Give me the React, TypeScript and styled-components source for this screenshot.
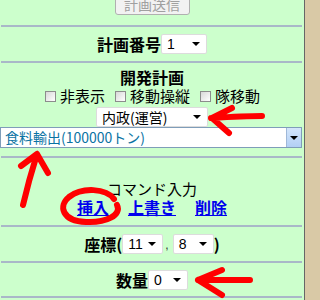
import React from 'react';
import styled, {createGlobalStyle} from 'styled-components';

const GlobalStyle = createGlobalStyle`
  html, body {
    margin: 0;
    padding: 0;
    background: #d9c9a6;
  }
  body {
    font-family: "Noto Sans CJK JP", "Liberation Sans", sans-serif;
  }
`;

const Page = styled.div`
  position: relative;
  width: 304px;
  height: 300px;
  overflow: hidden;
  background: #ccffcc;
  border-right: 1px solid #666666;
`;

const Section = styled.div<{$top: number; $bottom: number}>`
  display: flex;
  flex-direction: column;
  align-items: center;
  padding: ${p => p.$top}px 0 ${p => p.$bottom}px;
`;

const Rule = styled.div`
  height: 2px;
  margin: 0 2px 0 1px;
  background: #a9b8c8;
`;

const SendButton = styled.button`
  margin-top: -7px;
  width: 75px;
  height: 22px;
  padding: 0;
  font-family: inherit;
  font-size: 14px;
  line-height: 20px;
  color: #a0a0a0;
  background: #f2f2f2;
  border: 1px solid #b0b0b0;
  border-radius: 3px;
`;

const Row = styled.div`
  display: flex;
  align-items: center;
  justify-content: center;
  height: 20px;
`;

const Label = styled.span`
  font-size: 16px;
  font-weight: 700;
  line-height: 20px;
  color: #000;
`;

const Title = styled.div`
  height: 20px;
  font-size: 16px;
  font-weight: 700;
  line-height: 20px;
  color: #000;
`;

const SubTitle = styled.div`
  height: 18px;
  font-size: 15px;
  line-height: 18px;
  color: #000;
`;

const SelectBox = styled.div<{$width: number; $top?: number}>`
  display: flex;
  align-items: center;
  justify-content: space-between;
  box-sizing: border-box;
  width: ${p => p.$width}px;
  height: 20px;
  margin-top: ${p => p.$top ?? 0}px;
  padding: 0 6px 0 5px;
  background: #fff;
  border: 1px solid #dcdcdc;
  border-radius: 2px;
  font-family: "Liberation Sans", "Noto Sans CJK JP", sans-serif;
  font-size: 14px;
  line-height: 18px;
  color: #000;
`;

const SelectText = styled.span`
  font-family: "Noto Sans CJK JP", sans-serif;
`;

const Caret = styled.span`
  width: 0;
  height: 0;
  border-left: 4px solid transparent;
  border-right: 4px solid transparent;
  border-top: 4px solid #000;
`;

const CheckRow = styled.div`
  display: flex;
  align-items: center;
  gap: 10px;
  height: 18px;
  margin-left: 1px;
`;

const CheckItem = styled.label`
  display: flex;
  align-items: center;
  gap: 4px;
  font-size: 15px;
  line-height: 18px;
  color: #000;
`;

const CheckBox = styled.span`
  box-sizing: border-box;
  width: 11px;
  height: 11px;
  border: 1px solid #8c8c8c;
  background: linear-gradient(135deg, #d8d8d8, #ffffff);
`;

const WideSelect = styled.div`
  display: flex;
  align-items: stretch;
  box-sizing: border-box;
  align-self: flex-start;
  width: 302px;
  height: 21px;
  background: #fff;
  border: 1px solid #7f9db9;
`;

const WideText = styled.span`
  flex: 1;
  padding-left: 4px;
  font-size: 14px;
  line-height: 19px;
  color: #0a73a3;
`;

const WideButton = styled.span`
  display: flex;
  align-items: center;
  justify-content: center;
  width: 14px;
  background: linear-gradient(#d4e6fb, #b2cff5);
  border-left: 1px solid #9fb8d8;
`;

const Links = styled.div`
  display: flex;
  gap: 19px;
  height: 18px;
  align-items: center;
`;

const Link = styled.a`
  font-size: 16px;
  font-weight: 700;
  line-height: 18px;
  color: #0000ee;
  text-decoration: underline;
`;

const Paren = styled.span`
  font-size: 16px;
  font-weight: 700;
  line-height: 20px;
  color: #000;
`;

const Comma = styled.span`
  align-self: flex-end;
  margin: 0 4px 0 2px;
  font-family: "Liberation Sans", sans-serif;
  font-size: 12px;
  line-height: 18px;
  color: #333;
`;

const Annotations = styled.svg`
  position: absolute;
  left: 0;
  top: 0;
  pointer-events: none;
`;

export default function App(): JSX.Element {
  return (
    <>
      <GlobalStyle />
      <Page>
        <Section $top={0} $bottom={10}>
          <SendButton disabled>計画送信</SendButton>
        </Section>
        <Rule />
        <Section $top={7} $bottom={7}>
          <Row>
            <Label>計画番号</Label>
            <SelectBox $width={46}>
              1<Caret />
            </SelectBox>
          </Row>
        </Section>
        <Rule />
        <Section $top={4} $bottom={8}>
          <Title>開発計画</Title>
          <CheckRow>
            <CheckItem>
              <CheckBox />
              非表示
            </CheckItem>
            <CheckItem>
              <CheckBox />
              移動操縦
            </CheckItem>
            <CheckItem>
              <CheckBox />
              隊移動
            </CheckItem>
          </CheckRow>
          <SelectBox $width={112} $top={2}>
            <SelectText>内政(運営)</SelectText>
            <Caret />
          </SelectBox>
          <WideSelect>
            <WideText>食料輸出(100000トン)</WideText>
            <WideButton>
              <Caret />
            </WideButton>
          </WideSelect>
        </Section>
        <Rule />
        <Section $top={22} $bottom={9}>
          <SubTitle>コマンド入力</SubTitle>
          <Links>
            <Link href="#">挿入</Link>
            <Link href="#">上書き</Link>
            <Link href="#">削除</Link>
          </Links>
        </Section>
        <Rule />
        <Section $top={7} $bottom={7}>
          <Row>
            <Label>座標(</Label>
            <SelectBox $width={41}>
              11<Caret />
            </SelectBox>
            <Comma>,</Comma>
            <SelectBox $width={41}>
              8<Caret />
            </SelectBox>
            <Paren>)</Paren>
          </Row>
        </Section>
        <Rule />
        <Section $top={7} $bottom={6}>
          <Row>
            <Label>数量</Label>
            <SelectBox $width={40}>
              0<Caret />
            </SelectBox>
          </Row>
        </Section>
        <Rule />
        <Annotations width="307" height="300" viewBox="0 0 307 300">
          <g
            fill="none"
            stroke="#ff0000"
            strokeWidth="6"
            strokeLinecap="round"
            strokeLinejoin="round">
            <path d="M211 118 C228 117 245 116 262 116 M212 118 L232 108 M212 118 L229 133" />
            <path d="M37 154 C32 170 27 188 23 205 M37 154 L21 166 M37 154 L48 173" />
            <path d="M114 199 C106 188 82 187 69 197 C58 206 62 221 86 222 C106 223 122 215 117 205" />
            <path d="M198 280 C215 280 232 280 250 280 M198 280 L222 270 M198 280 L222 295" />
          </g>
        </Annotations>
      </Page>
    </>
  );
}
